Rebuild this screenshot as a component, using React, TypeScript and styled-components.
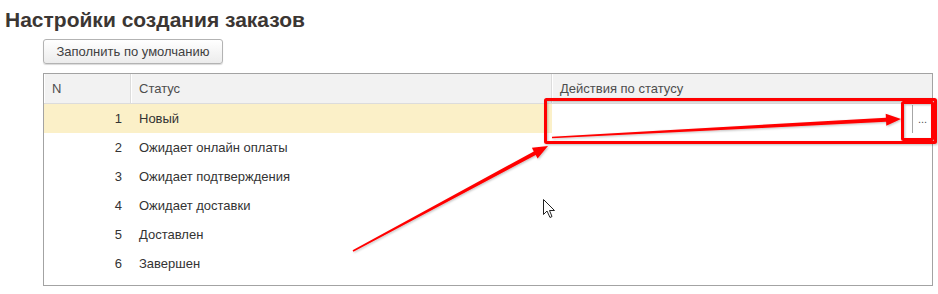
import React from "react";
import styled, { createGlobalStyle } from "styled-components";

const GlobalStyle = createGlobalStyle`
  html, body {
    margin: 0;
    padding: 0;
    background: #ffffff;
  }
  body {
    font-family: "Liberation Sans", Arial, sans-serif;
  }
`;

const PageStyled = styled.div`
  position: relative;
  width: 938px;
  height: 294px;
  overflow: hidden;
  background: #ffffff;
`;

const TitleStyled = styled.h1`
  margin: 0;
  padding: 8px 0 0 5px;
  height: 30px;
  box-sizing: border-box;
  font-size: 21px;
  line-height: 24px;
  font-weight: bold;
  color: #3b3633;
`;

const ToolbarStyled = styled.div`
  display: flex;
  padding: 9px 0 0 43px;
`;

const ButtonStyled = styled.button`
  height: 25px;
  width: 180px;
  padding: 0 8px;
  border: 1px solid #b3b3b3;
  border-radius: 3px;
  background: linear-gradient(#ffffff, #ececec);
  box-shadow: 0 1px 1px rgba(0, 0, 0, 0.15);
  font-family: "Liberation Sans", Arial, sans-serif;
  font-size: 13px;
  color: #404040;
`;

const TableStyled = styled.div`
  margin: 9px 0 0 43px;
  width: 890px;
  height: 213px;
  box-sizing: border-box;
  border: 1px solid #a3a3a3;
  display: grid;
  grid-template-columns: 87px 421px 1fr;
  grid-template-rows: 30px repeat(6, 29px);
  align-content: start;
  font-size: 13px;
`;

const HeadCellStyled = styled.div<{ $last?: boolean }>`
  display: flex;
  align-items: center;
  padding-left: 8px;
  background: #f2f2f2;
  border-bottom: 1px solid #dcdcdc;
  border-right: ${(p) => (p.$last ? "none" : "1px solid #dcdcdc")};
  box-shadow: inset 1px 0 0 #ffffff;
  color: #4d4d4d;
`;

const CellStyled = styled.div<{ $selected?: boolean; $align?: "left" | "right" }>`
  display: flex;
  align-items: center;
  justify-content: ${(p) => (p.$align === "right" ? "flex-end" : "flex-start")};
  padding: ${(p) => (p.$align === "right" ? "0 9px 0 0" : "0 0 0 8px")};
  background: ${(p) => (p.$selected ? "#fbf0c8" : "transparent")};
  color: #333333;
`;

const EditCellStyled = styled.div`
  display: flex;
  align-items: stretch;
  justify-content: flex-end;
  background: #ffffff;
  padding: 1px 0 0;
`;

const ChoiceButtonStyled = styled.div`
  width: 19px;
  border-left: 1px solid #a6a6a6;
  display: flex;
  align-items: center;
  justify-content: center;
  font-size: 11px;
  color: #555555;
`;

const OverlayStyled = styled.svg`
  position: absolute;
  left: 0;
  top: 0;
  pointer-events: none;
`;

const statuses = [
  "Новый",
  "Ожидает онлайн оплаты",
  "Ожидает подтверждения",
  "Ожидает доставки",
  "Доставлен",
  "Завершен",
];

// tapered arrow from (x1,y1) to tip (x2,y2)
const arrowPoints = (x1: number, y1: number, x2: number, y2: number) => {
  const len = Math.hypot(x2 - x1, y2 - y1);
  const ux = (x2 - x1) / len;
  const uy = (y2 - y1) / len;
  const nx = -uy;
  const ny = ux;
  const headLen = 15;
  const headW = 6;
  const bx = x2 - ux * headLen;
  const by = y2 - uy * headLen;
  const p = (x: number, y: number) => `${x.toFixed(1)},${y.toFixed(1)}`;
  return [
    p(x1 + nx * 0.8, y1 + ny * 0.8),
    p(bx + nx * 2, by + ny * 2),
    p(bx + nx * headW, by + ny * headW),
    p(x2, y2),
    p(bx - nx * headW, by - ny * headW),
    p(bx - nx * 2, by - ny * 2),
    p(x1 - nx * 0.8, y1 - ny * 0.8),
  ].join(" ");
};

export default function App() {
  return (
    <PageStyled>
      <GlobalStyle />
      <TitleStyled>Настройки создания заказов</TitleStyled>
      <ToolbarStyled>
        <ButtonStyled>Заполнить по умолчанию</ButtonStyled>
      </ToolbarStyled>
      <TableStyled>
        <HeadCellStyled>N</HeadCellStyled>
        <HeadCellStyled>Статус</HeadCellStyled>
        <HeadCellStyled $last>Действия по статусу</HeadCellStyled>
        {statuses.map((status, index) => (
          <React.Fragment key={status}>
            <CellStyled $selected={index === 0} $align="right">
              {index + 1}
            </CellStyled>
            <CellStyled $selected={index === 0}>{status}</CellStyled>
            {index === 0 ? (
              <EditCellStyled>
                <ChoiceButtonStyled>...</ChoiceButtonStyled>
              </EditCellStyled>
            ) : (
              <CellStyled />
            )}
          </React.Fragment>
        ))}
      </TableStyled>

      <OverlayStyled width={938} height={294} viewBox="0 0 938 294">
        <defs>
          <filter id="shadow" x="-10%" y="-50%" width="120%" height="200%">
            <feDropShadow dx="1" dy="1" stdDeviation="1" floodColor="#000" floodOpacity="0.25" />
          </filter>
        </defs>
        <g filter="url(#shadow)" fill="#ff0000" stroke="none">
          <rect x="545.5" y="99.5" width="390" height="43" rx="1" fill="none" stroke="#ff0000" strokeWidth="3" />
          <rect x="902.5" y="102.5" width="30" height="37" rx="1" fill="none" stroke="#ff0000" strokeWidth="3" />
          <polygon points={arrowPoints(552, 137.5, 901, 119)} />
          <polygon points={arrowPoints(353, 251, 548, 146)} />
        </g>
        {/* mouse pointer */}
        <path
          d="M543.5 199.5 L543.5 214.5 L547 211 L550 217.5 L552 216.5 L549.5 210.5 L554.5 210.5 Z"
          fill="#ffffff"
          stroke="#222222"
          strokeWidth="1"
          strokeLinejoin="miter"
        />
      </OverlayStyled>
    </PageStyled>
  );
}
